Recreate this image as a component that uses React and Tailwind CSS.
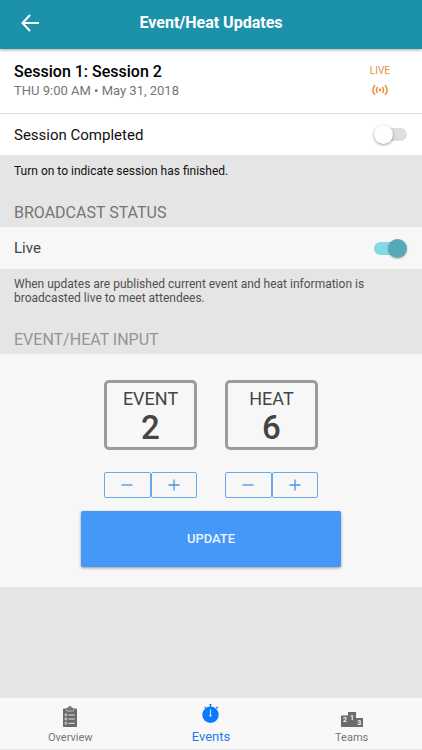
import { useState } from "react";

function Toggle({ id, checked, onChange }) {
  return (
    <input
      id={id}
      type="checkbox"
      checked={checked}
      onChange={onChange}
      className="relative h-[13px] w-[33px] shrink-0 appearance-none rounded-full bg-[#dedede] before:absolute before:-top-[3px] before:left-0 before:h-[19px] before:w-[19px] before:rounded-full before:bg-white before:shadow-[0_1px_3px_rgba(0,0,0,0.4)] checked:bg-[#84d9e4] checked:before:left-[14px] checked:before:bg-[#56aab8] checked:before:shadow-[0_1px_2px_rgba(0,0,0,0.25)]"
    />
  );
}

function Counter({ label, value, onChange }) {
  const button =
    "flex h-[26px] flex-1 items-center justify-center rounded-[2px] border border-[#6aa8ec] text-[#4a94e8]";
  return (
    <div className="w-[93px]">
      <div className="flex h-[70px] flex-col items-center rounded-[5px] border-[3px] border-[#9c9c9c] pt-1 text-[#444]">
        <span className="text-[18px] leading-[24px]">{label}</span>
        <output className="text-[33px] leading-[34px] font-medium">{value}</output>
      </div>
      <div className="mt-[22px] flex">
        <button type="button" aria-label={`Decrease ${label}`} onClick={() => onChange(Math.max(1, value - 1))} className={button}>
          <svg width="12" height="12" viewBox="0 0 12 12" stroke="currentColor" strokeWidth="1.3">
            <path d="M.5 6h11" />
          </svg>
        </button>
        <button type="button" aria-label={`Increase ${label}`} onClick={() => onChange(value + 1)} className={button}>
          <svg width="12" height="12" viewBox="0 0 12 12" stroke="currentColor" strokeWidth="1.3">
            <path d="M.5 6h11M6 .5v11" />
          </svg>
        </button>
      </div>
    </div>
  );
}

function ClipboardIcon() {
  return (
    <svg width="14" height="21" viewBox="0 0 14 21">
      <path fill="#6b6b6b" d="M1 2.500h2.500C4 1.800 4.800 1.700 5.300 1.500 5.500.6 6.200 0 7 0s1.500.6 1.700 1.500c.5.2 1.300.3 1.800 1H13c.6 0 1 .4 1 1V20c0 .6-.4 1-1 1H1c-.6 0-1-.4-1-1V3.500c0-.6.4-1 1-1z" />
      <path fill="none" stroke="#e8e8e8" strokeWidth=".7" d="M3 3.200c0 1.200.5 1.800 1.400 1.800h5.200c.9 0 1.400-.6 1.400-1.800" />
      <circle cx="7" cy="2" r=".6" fill="#e8e8e8" />
      <path fill="none" stroke="#e8e8e8" strokeWidth="1" d="M5.500 9h6.300M5.500 13h6.300M5.500 17.300h6.300" />
      <path fill="none" stroke="#e8e8e8" strokeWidth=".7" d="M2 8h1.800v1.800H2zM2 12.100h1.800v1.800H2zM2 16.400h1.800v1.800H2z" />
    </svg>
  );
}

function StopwatchIcon() {
  return (
    <svg width="18" height="19" viewBox="0 0 18 19">
      <circle cx="8.500" cy="10.700" r="8.200" fill="#0a7bff" />
      <path fill="#0a7bff" d="M7.500 0h2v1.300h-.4V3H7.900V1.300h-.4zM14.900 2.500l1.300 1.200-1.100 1.200-1.300-1.200zM2.200 3.200l.9-.7 1 1.200-1 .8z" />
      <path stroke="#d8eaff" strokeWidth="1" d="M8.500 5.500v6" />
      <circle cx="8.500" cy="11.700" r="1.100" fill="#d8eaff" />
    </svg>
  );
}

function PodiumIcon() {
  return (
    <svg width="22" height="15" viewBox="0 0 22 15">
      <path fill="#6b6b6b" d="M0 3.500h7V0h8v6h7v9H0z" />
      <g fill="#f2f2f2" fontFamily="Roboto, sans-serif" fontSize="7" fontWeight="700" textAnchor="middle">
        <text x="4" y="10">2</text>
        <text x="11" y="7.500">1</text>
        <text x="18.300" y="13">3</text>
      </g>
    </svg>
  );
}

export default function App() {
  const [completed, setCompleted] = useState(false);
  const [live, setLive] = useState(true);
  const [event, setEvent] = useState(2);
  const [heat, setHeat] = useState(6);

  return (
    <div className="flex min-h-screen flex-col bg-[#e5e5e5] font-[Roboto,sans-serif] text-[#111]">
      <header className="z-10 grid h-[49px] grid-cols-[40px_1fr_40px] items-center bg-[#1c92aa] px-4 pb-1 text-white shadow-[0_1px_3px_rgba(0,0,0,0.35)]">
        <button type="button" aria-label="Back" className="pl-1">
          <svg width="20" height="18" viewBox="0 0 20 18" fill="none" stroke="currentColor" strokeWidth="2">
            <path d="M10 1 2.500 9l7.500 8M2.500 9H19" />
          </svg>
        </button>
        <h1 className="text-center text-[16px] leading-[20px] font-bold">Event/Heat Updates</h1>
      </header>

      <main className="flex-1">
        <section className="flex h-[65px] justify-between border-b border-[#dedede] bg-white pt-[13px] pr-8 pl-[14px]">
          <div>
            <h2 className="text-[16px] leading-[20px] font-medium text-black">Session 1: Session 2</h2>
            <p className="text-[13px] leading-[18px] text-[#757575]">THU 9:00 AM • May 31, 2018</p>
          </div>
          <div className="flex flex-col items-center gap-[6px] pt-[2px] text-[#e0943e]">
            <span className="text-[10px] leading-[14px]">LIVE</span>
            <svg width="16" height="12" viewBox="0 0 16 12" fill="none" stroke="currentColor" strokeWidth="1.500">
              <path d="M3 1C.4 4 .4 8 3 11M13 1c2.600 3 2.600 7 0 10M5.600 3C4.100 5 4.100 7 5.600 9M10.400 3c1.500 2 1.500 4 0 6" />
              <circle cx="8" cy="6" r="1.400" fill="currentColor" stroke="none" />
            </svg>
          </div>
        </section>

        <div className="flex h-[41px] items-center justify-between bg-white pr-[15px] pl-[14px]">
          <label htmlFor="completed" className="text-[15px] leading-[20px]">Session Completed</label>
          <Toggle id="completed" checked={completed} onChange={() => setCompleted(!completed)} />
        </div>
        <p className="px-[14px] pt-2 text-[12px] leading-[16px]">Turn on to indicate session has finished.</p>

        <h2 className="px-[14px] pt-6 pb-1 text-[16px] leading-[20px] text-[#757575]">BROADCAST STATUS</h2>
        <div className="flex h-[42px] items-center justify-between bg-[#f7f7f7] pr-[15px] pl-[14px]">
          <label htmlFor="live" className="text-[15px] leading-[20px] text-[#444]">Live</label>
          <Toggle id="live" checked={live} onChange={() => setLive(!live)} />
        </div>
        <p className="px-[14px] pt-2 text-[12px] leading-[14px] text-[#505050]">
          When updates are published current event and heat information is broadcasted live to meet attendees.
        </p>

        <h2 className="px-[14px] pt-[25px] pb-1 text-[16px] leading-[20px] text-[#949494]">EVENT/HEAT INPUT</h2>
        <section className="bg-[#f7f7f7] px-[81px] pt-[26px] pb-5">
          <div className="flex justify-center gap-7">
            <Counter label="EVENT" value={event} onChange={setEvent} />
            <Counter label="HEAT" value={heat} onChange={setHeat} />
          </div>
          <button type="button" className="mt-[13px] h-[56px] w-full rounded-[2px] bg-[#4597f8] text-[13px] font-medium text-[#eaf4ff] shadow-[0_1px_3px_rgba(0,0,0,0.4)]">
            UPDATE
          </button>
        </section>
      </main>

      <nav className="grid h-[52px] grid-cols-3 border-b border-[#e8e8e8] bg-[#f8f8f8] text-[11px] leading-[16px] text-[#757575]">
        <a href="#overview" className="flex flex-col items-center justify-end gap-[3px] pb-[3px]">
          <ClipboardIcon />
          Overview
        </a>
        <a href="#events" aria-current="page" className="flex flex-col items-center justify-end gap-[6px] pb-1 text-[13px] text-[#1c7ee8]">
          <StopwatchIcon />
          Events
        </a>
        <a href="#teams" className="flex flex-col items-center justify-end gap-[3px] pb-[3px]">
          <PodiumIcon />
          Teams
        </a>
      </nav>
    </div>
  );
}
